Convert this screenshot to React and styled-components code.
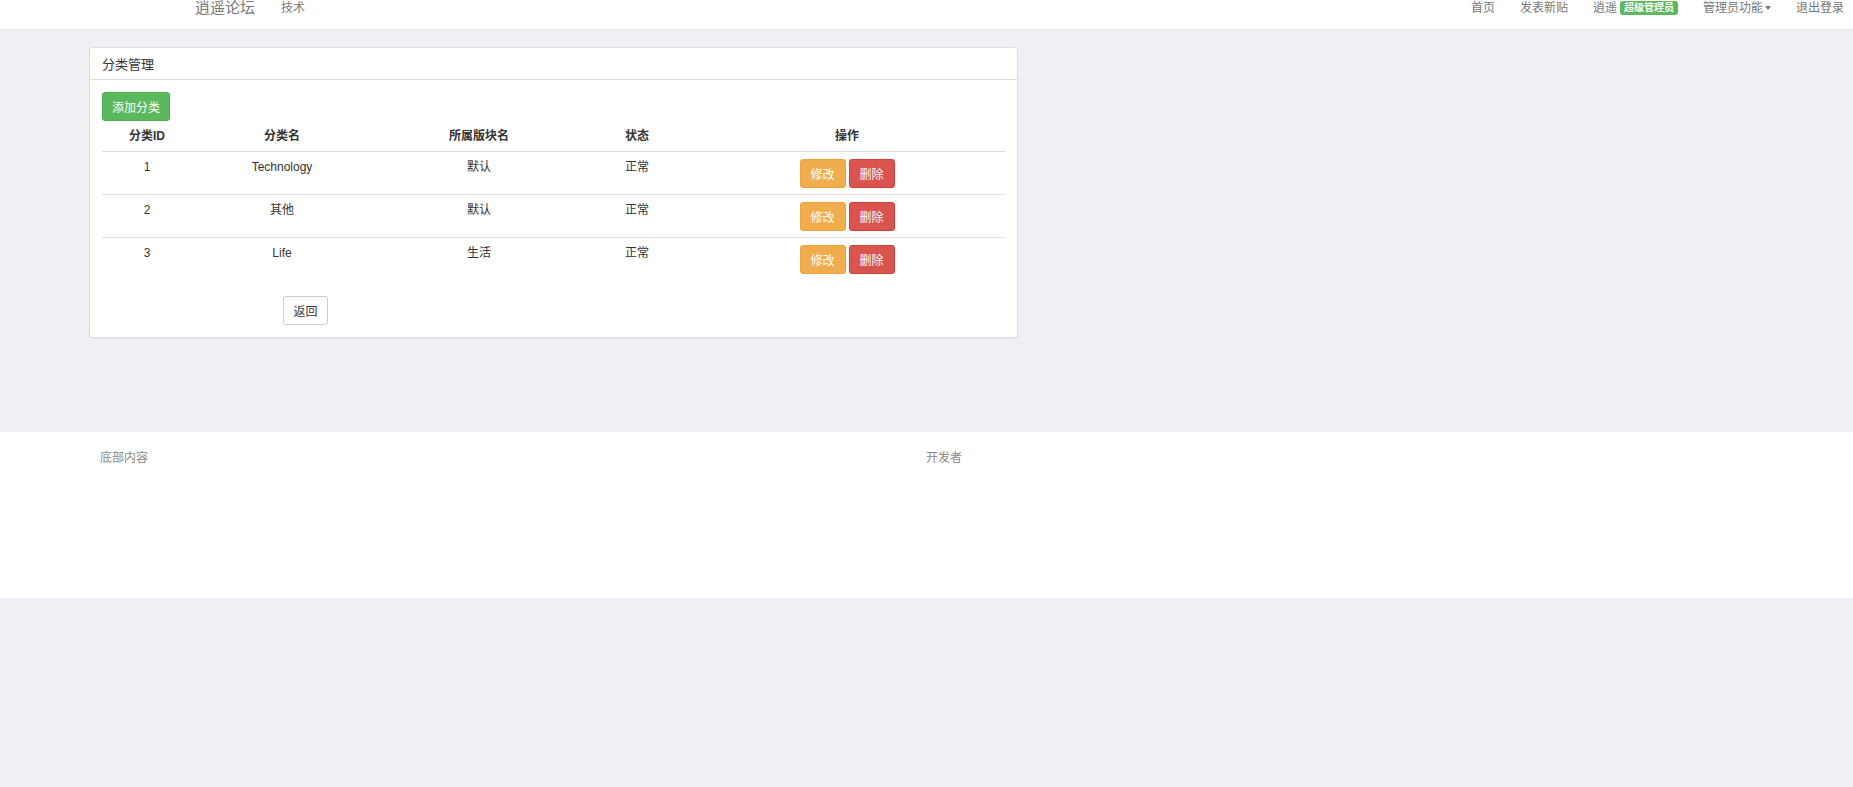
import React from 'react';
import styled, { createGlobalStyle } from 'styled-components';

const GlobalStyle = createGlobalStyle`
    html, body {
        margin: 0;
        padding: 0;
        background: #eff0f4;
        font-family: "Liberation Sans", "Noto Sans CJK SC", sans-serif;
        font-size: 12px;
        color: #333;
    }
`

const Navbar = styled.div`
    height: 29px;
    background: #fff;
    border-bottom: 1px solid #e4e5e9;
    display: flex;
    align-items: flex-start;
    justify-content: space-between;
`

const NavLeft = styled.div`
    display: flex;
    align-items: center;
    padding-left: 195px;
    height: 16px;
`

const Brand = styled.span`
    font-size: 15px;
    line-height: 16px;
    color: #777;
    margin-right: 26px;
`

const NavRight = styled.div`
    display: flex;
    align-items: center;
    height: 16px;
    padding-right: 9px;
`

const NavItem = styled.span`
    font-size: 12px;
    line-height: 16px;
    color: #777;
    margin-left: ${props => props.gap ?? 25}px;
    display: flex;
    align-items: center;
    white-space: nowrap;
`

const Badge = styled.span`
    background: #5cb85c;
    color: #fff;
    font-weight: bold;
    font-size: 10px;
    line-height: 12px;
    padding: 1px 4px;
    border-radius: 3px;
    margin-left: 3px;
`

const Caret = styled.span`
    display: inline-block;
    width: 0;
    height: 0;
    margin-left: 2px;
    border-top: 4px solid #777;
    border-left: 3px solid transparent;
    border-right: 3px solid transparent;
`

const Main = styled.div`
    padding: 17px 0 94px 89px;
`

const Panel = styled.div`
    width: 927px;
    background: #fff;
    border: 1px solid #dcdde1;
    border-radius: 3px;
    box-shadow: 0 1px 1px rgba(0, 0, 0, 0.05);
`

const PanelHeading = styled.div`
    height: 31px;
    padding: 0 12px;
    display: flex;
    align-items: center;
    font-size: 13px;
    color: #333;
    border-bottom: 1px solid #dcdde1;
`

const PanelBody = styled.div`
    padding: 12px;
`

const Btn = styled.button`
    height: 29px;
    width: ${props => props.width || 46}px;
    padding: 0;
    font-family: inherit;
    font-size: 12px;
    border-radius: 3px;
    border: 1px solid ${props => props.border};
    background: ${props => props.bg};
    color: ${props => props.color || '#fff'};
    cursor: pointer;
`

const Table = styled.table`
    width: 904px;
    border-collapse: collapse;
    table-layout: fixed;
`

const Th = styled.th`
    font-weight: bold;
    text-align: center;
    padding: 7px 0 6px;
    line-height: 17px;
    font-size: 12px;
    border-bottom: 1px solid #dcdde1;
`

const Td = styled.td`
    text-align: center;
    vertical-align: top;
    padding: 7px 0 6px;
    line-height: 17px;
    height: 29px;
    border-top: ${props => (props.first ? 'none' : '1px solid #dcdde1')};
`

const Actions = styled.div`
    display: flex;
    justify-content: center;
    gap: 3px;
`

const BackRow = styled.div`
    padding: 16px 0 0 181px;
`

const Footer = styled.div`
    height: 166px;
    background: #fff;
    display: grid;
    grid-template-columns: 826px 1fr;
    padding-left: 100px;
    padding-top: 19px;
    box-sizing: border-box;
    color: #888;
    font-size: 12px;
    line-height: 14px;
`

const cols = [90, 180, 214, 102, 318];

const rows = [
    { id: 1, name: 'Technology', board: '默认', status: '正常' },
    { id: 2, name: '其他', board: '默认', status: '正常' },
    { id: 3, name: 'Life', board: '生活', status: '正常' },
];

export default function App() {
    return (
        <>
            <GlobalStyle />
            <Navbar>
                <NavLeft>
                    <Brand>逍遥论坛</Brand>
                    <NavItem gap={0}>技术</NavItem>
                </NavLeft>
                <NavRight>
                    <NavItem>首页</NavItem>
                    <NavItem>发表新贴</NavItem>
                    <NavItem>逍遥<Badge>超级管理员</Badge></NavItem>
                    <NavItem>管理员功能<Caret /></NavItem>
                    <NavItem>退出登录</NavItem>
                </NavRight>
            </Navbar>
            <Main>
                <Panel>
                    <PanelHeading>分类管理</PanelHeading>
                    <PanelBody>
                        <Btn width={68} bg="#5cb85c" border="#4cae4c">添加分类</Btn>
                        <Table>
                            <colgroup>
                                {cols.map((w, i) => <col key={i} style={{ width: w }} />)}
                            </colgroup>
                            <thead>
                                <tr>
                                    <Th>分类ID</Th>
                                    <Th>分类名</Th>
                                    <Th>所属版块名</Th>
                                    <Th>状态</Th>
                                    <Th>操作</Th>
                                </tr>
                            </thead>
                            <tbody>
                                {rows.map((r, i) => (
                                    <tr key={r.id}>
                                        <Td first={i === 0}>{r.id}</Td>
                                        <Td first={i === 0}>{r.name}</Td>
                                        <Td first={i === 0}>{r.board}</Td>
                                        <Td first={i === 0}>{r.status}</Td>
                                        <Td first={i === 0}>
                                            <Actions>
                                                <Btn bg="#f0ad4e" border="#eea236">修改</Btn>
                                                <Btn bg="#d9534f" border="#d43f3a">删除</Btn>
                                            </Actions>
                                        </Td>
                                    </tr>
                                ))}
                            </tbody>
                        </Table>
                        <BackRow>
                            <Btn width={45} bg="#fff" border="#ccc" color="#333">返回</Btn>
                        </BackRow>
                    </PanelBody>
                </Panel>
            </Main>
            <Footer>
                <div>底部内容</div>
                <div>开发者</div>
            </Footer>
        </>
    );
}
